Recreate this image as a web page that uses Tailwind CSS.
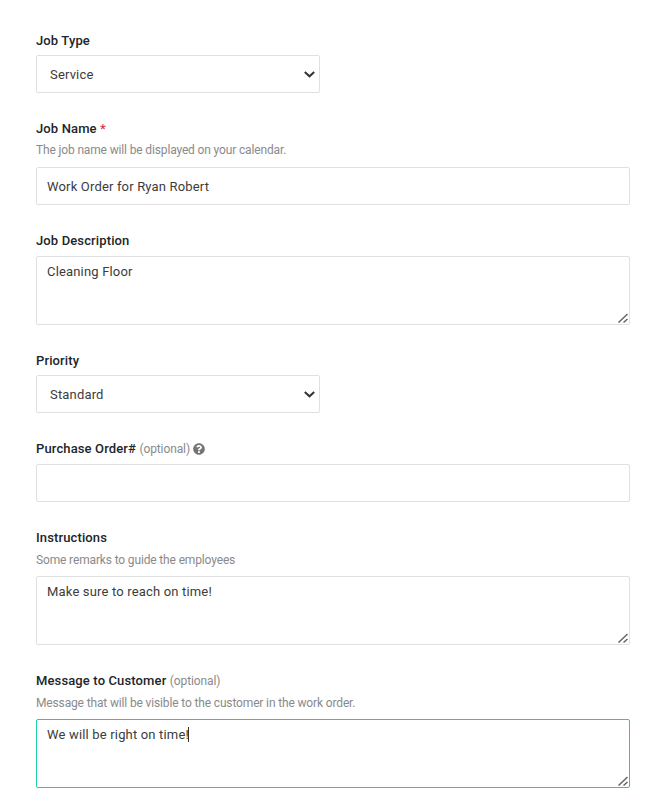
<!doctype html>
<html lang="en">
<head>
<meta charset="utf-8">
<title>Job form</title>
<script src="https://cdn.jsdelivr.net/npm/@tailwindcss/browser@4"></script>
</head>
<body class="bg-white font-['Roboto',sans-serif] text-[13px] text-[#333]">
<form class="flex flex-col pt-[30px] pl-[36px] pr-[20px]">
  <div class="mb-[25px]">
    <label class="block h-[20px] leading-[21px] mb-[5px] font-medium text-[13px] tracking-[0.13px] text-[#212529]">Job Type</label>
    <div class="relative w-[284px]">
      <select class="block w-full h-[38px] pl-[13px] pr-[13px] pt-[2px] border border-[#e0e0e0] rounded-[2px] bg-white text-[13px] text-[#3c3c3c] tracking-[0.17px] appearance-none outline-none">
        <option>Service</option>
      </select>
      <svg class="absolute right-[5px] top-[16px] w-[11px] h-[7px] pointer-events-none" viewBox="0 0 11 7" fill="none" stroke="#333" stroke-width="2"><path d="M0.800 1l4.700 4.300 4.700-4.300"/></svg>
    </div>
  </div>
  <div class="mb-[25px]">
    <label class="block h-[20px] leading-[22px] mb-[2px] font-medium text-[13px] tracking-[0.13px] text-[#212529]">Job Name <span class="text-[#dc3545]">*</span></label>
    <p class="h-[20px] leading-[20px] mb-[7px] text-[12px] tracking-[-0.145px] text-[#8a8a8a]">The job name will be displayed on your calendar.</p>
    <input value="Work Order for Ryan Robert" class="block w-full h-[38px] px-[10px] border border-[#e0e0e0] rounded-[2px] text-[13px] text-[#3c3c3c] tracking-[0.17px] outline-none">
  </div>
  <div class="mb-[25px]">
    <label class="block h-[20px] leading-[22px] mb-[6px] font-medium text-[13px] tracking-[0.13px] text-[#212529]">Job Description</label>
    <div class="relative">
      <textarea class="block w-full h-[69px] px-[10px] py-[6px] border border-[#e0e0e0] rounded-[2px] text-[13px] text-[#3c3c3c] leading-[18px] tracking-[0.17px] outline-none resize-none">Cleaning Floor</textarea>
      <svg class="absolute right-[2px] bottom-[2px] w-[10px] h-[10px] pointer-events-none" viewBox="0 0 10 10" fill="none" stroke="#666" stroke-width="1.5"><path d="M0.500 9.500L9.500 1M5.500 9.500L9.500 6"/></svg>
    </div>
  </div>
  <div class="mb-[25px]">
    <label class="block h-[20px] leading-[22px] mb-[5px] font-medium text-[13px] tracking-[0.13px] text-[#212529]">Priority</label>
    <div class="relative w-[284px]">
      <select class="block w-full h-[38px] pl-[13px] pr-[13px] pt-[2px] border border-[#e0e0e0] rounded-[2px] bg-white text-[13px] text-[#3c3c3c] tracking-[0.17px] appearance-none outline-none">
        <option>Standard</option>
      </select>
      <svg class="absolute right-[5px] top-[16px] w-[11px] h-[7px] pointer-events-none" viewBox="0 0 11 7" fill="none" stroke="#333" stroke-width="2"><path d="M0.800 1l4.700 4.300 4.700-4.300"/></svg>
    </div>
  </div>
  <div class="mb-[25px]">
    <label class="flex items-center gap-[3px] h-[20px] pt-[2px] leading-[20px] mb-[6px] font-medium text-[13px] tracking-[0.13px] text-[#212529]">
      <span>Purchase Order# <span class="font-normal text-[12px] tracking-[-0.1px] text-[#8a8a8a]">(optional)</span></span>
      <svg class="w-[12px] h-[12px]" viewBox="0 0 512 512" fill="#757575"><path d="M504 256c0 137-111 248-248 248S8 393 8 256 119 8 256 8s248 111 248 248zM262.700 90c-54.500 0-89.300 23-116.500 63.800-3.500 5.300-2.400 12.400 2.700 16.300l34.700 26.300c5.200 3.900 12.600 3 16.700-2.100 17.900-22.700 30.100-35.800 57.300-35.800 20.400 0 45.700 13.100 45.700 32.900 0 15-12.400 22.700-32.500 34C247.100 238.500 216 254.900 216 296v4c0 6.600 5.400 12 12 12h56c6.600 0 12-5.400 12-12v-1.300c0-28.500 83.200-29.700 83.200-106.700 0-58-60.200-102-116.500-102zM256 338c-25.400 0-46 20.600-46 46s20.600 46 46 46 46-20.600 46-46-20.600-46-46-46z"/></svg>
    </label>
    <input class="block w-full h-[38px] px-[10px] border border-[#e0e0e0] rounded-[2px] text-[13px] outline-none">
  </div>
  <div class="mb-[25px]">
    <label class="block h-[20px] leading-[22px] mb-[2px] font-medium text-[13px] tracking-[0.13px] text-[#212529]">Instructions</label>
    <p class="h-[20px] leading-[22px] mb-[7px] text-[12px] tracking-[-0.145px] text-[#8a8a8a]">Some remarks to guide the employees</p>
    <div class="relative">
      <textarea class="block w-full h-[69px] px-[10px] py-[6px] border border-[#e0e0e0] rounded-[2px] text-[13px] text-[#3c3c3c] leading-[18px] tracking-[0.17px] outline-none resize-none">Make sure to reach on time!</textarea>
      <svg class="absolute right-[2px] bottom-[2px] w-[10px] h-[10px] pointer-events-none" viewBox="0 0 10 10" fill="none" stroke="#666" stroke-width="1.5"><path d="M0.500 9.500L9.500 1M5.500 9.500L9.500 6"/></svg>
    </div>
  </div>
  <div>
    <label class="block h-[20px] leading-[22px] mb-[2px] font-medium text-[13px] tracking-[0.13px] text-[#212529]">Message to Customer <span class="font-normal text-[12px] tracking-[-0.1px] text-[#8a8a8a]">(optional)</span></label>
    <p class="h-[20px] leading-[22px] mb-[7px] text-[12px] tracking-[-0.145px] text-[#8a8a8a]">Message that will be visible to the customer in the work order.</p>
    <div class="relative">
      <textarea class="block w-full h-[69px] px-[10px] py-[6px] border border-[#1ccfa8] rounded-[2px] text-[13px] text-[#3c3c3c] leading-[18px] tracking-[0.17px] outline-none resize-none">We will be right on time!</textarea>
      <span class="absolute left-[152px] top-[8px] w-px h-[15px] bg-[#333]"></span>
      <svg class="absolute right-[2px] bottom-[2px] w-[10px] h-[10px] pointer-events-none" viewBox="0 0 10 10" fill="none" stroke="#666" stroke-width="1.5"><path d="M0.500 9.500L9.500 1M5.500 9.500L9.500 6"/></svg>
    </div>
  </div>
</form>
</body>
</html>
